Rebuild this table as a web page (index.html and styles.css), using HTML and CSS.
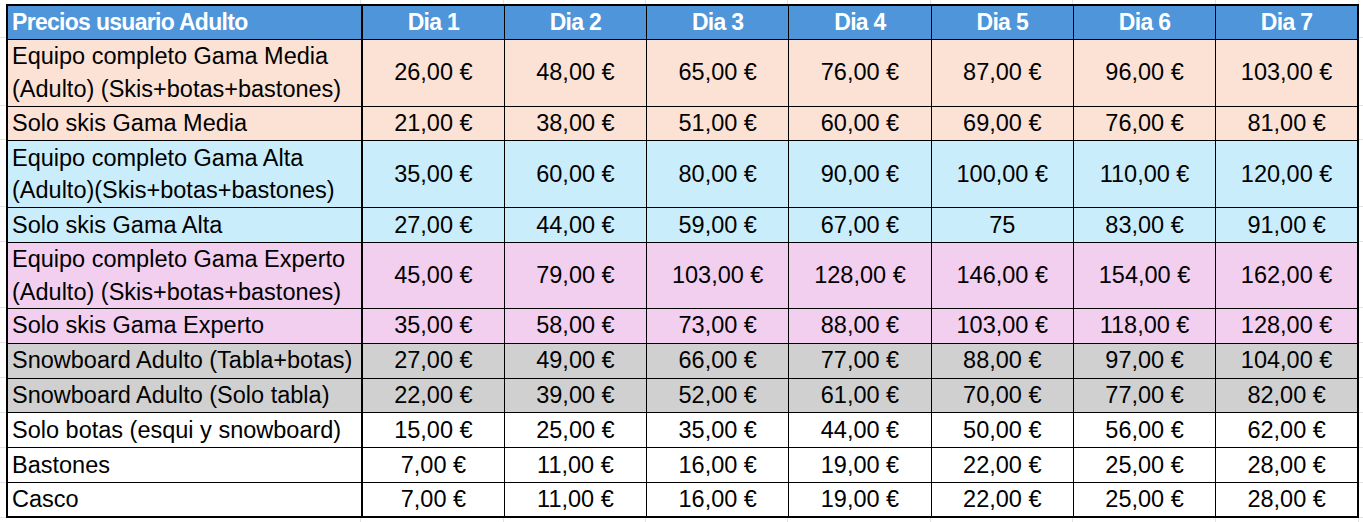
FILE: index.html
```html
<!DOCTYPE html>
<html lang="es">
<head>
<meta charset="utf-8">
<title>Precios usuario Adulto</title>
<link rel="stylesheet" href="styles.css">
</head>
<body>
<div class="sheet">
<table class="prices">
  <colgroup>
    <col class="col-label">
    <col><col><col><col><col><col><col>
  </colgroup>
  <thead>
    <tr class="head">
      <th class="label">Precios usuario Adulto</th>
      <th>Dia 1</th><th>Dia 2</th><th>Dia 3</th><th>Dia 4</th><th>Dia 5</th><th>Dia 6</th><th>Dia 7</th>
    </tr>
  </thead>
  <tbody>
    <tr class="media tall">
      <td class="label">Equipo completo Gama Media<br>(Adulto) (Skis+botas+bastones)</td>
      <td>26,00 €</td><td>48,00 €</td><td>65,00 €</td><td>76,00 €</td><td>87,00 €</td><td>96,00 €</td><td>103,00 €</td>
    </tr>
    <tr class="media">
      <td class="label">Solo skis Gama Media</td>
      <td>21,00 €</td><td>38,00 €</td><td>51,00 €</td><td>60,00 €</td><td>69,00 €</td><td>76,00 €</td><td>81,00 €</td>
    </tr>
    <tr class="alta tall">
      <td class="label">Equipo completo Gama Alta<br>(Adulto)(Skis+botas+bastones)</td>
      <td>35,00 €</td><td>60,00 €</td><td>80,00 €</td><td>90,00 €</td><td>100,00 €</td><td>110,00 €</td><td>120,00 €</td>
    </tr>
    <tr class="alta">
      <td class="label">Solo skis Gama Alta</td>
      <td>27,00 €</td><td>44,00 €</td><td>59,00 €</td><td>67,00 €</td><td>75</td><td>83,00 €</td><td>91,00 €</td>
    </tr>
    <tr class="experto tall">
      <td class="label">Equipo completo Gama Experto<br>(Adulto) (Skis+botas+bastones)</td>
      <td>45,00 €</td><td>79,00 €</td><td>103,00 €</td><td>128,00 €</td><td>146,00 €</td><td>154,00 €</td><td>162,00 €</td>
    </tr>
    <tr class="experto">
      <td class="label">Solo skis Gama Experto</td>
      <td>35,00 €</td><td>58,00 €</td><td>73,00 €</td><td>88,00 €</td><td>103,00 €</td><td>118,00 €</td><td>128,00 €</td>
    </tr>
    <tr class="snow">
      <td class="label">Snowboard Adulto (Tabla+botas)</td>
      <td>27,00 €</td><td>49,00 €</td><td>66,00 €</td><td>77,00 €</td><td>88,00 €</td><td>97,00 €</td><td>104,00 €</td>
    </tr>
    <tr class="snow">
      <td class="label">Snowboard Adulto (Solo tabla)</td>
      <td>22,00 €</td><td>39,00 €</td><td>52,00 €</td><td>61,00 €</td><td>70,00 €</td><td>77,00 €</td><td>82,00 €</td>
    </tr>
    <tr class="plain">
      <td class="label">Solo botas (esqui y snowboard)</td>
      <td>15,00 €</td><td>25,00 €</td><td>35,00 €</td><td>44,00 €</td><td>50,00 €</td><td>56,00 €</td><td>62,00 €</td>
    </tr>
    <tr class="plain">
      <td class="label">Bastones</td>
      <td>7,00 €</td><td>11,00 €</td><td>16,00 €</td><td>19,00 €</td><td>22,00 €</td><td>25,00 €</td><td>28,00 €</td>
    </tr>
    <tr class="plain">
      <td class="label">Casco</td>
      <td>7,00 €</td><td>11,00 €</td><td>16,00 €</td><td>19,00 €</td><td>22,00 €</td><td>25,00 €</td><td>28,00 €</td>
    </tr>
  </tbody>
</table>
</div>
</body>
</html>
```
FILE: styles.css
```css
html, body {
  margin: 0;
  padding: 0;
}

body {
  background-color: #ffffff;
  font-family: "Liberation Sans", Arial, sans-serif;
  color: #000000;
  /* faint spreadsheet gridlines around the table */
  background-image:
    linear-gradient(#e2e2e2, #e2e2e2), linear-gradient(#e2e2e2, #e2e2e2),
    linear-gradient(#e2e2e2, #e2e2e2), linear-gradient(#e2e2e2, #e2e2e2),
    linear-gradient(#e2e2e2, #e2e2e2), linear-gradient(#e2e2e2, #e2e2e2),
    linear-gradient(#e2e2e2, #e2e2e2), linear-gradient(#e2e2e2, #e2e2e2),
    linear-gradient(#e2e2e2, #e2e2e2), linear-gradient(#e2e2e2, #e2e2e2),
    linear-gradient(#e2e2e2, #e2e2e2), linear-gradient(#e2e2e2, #e2e2e2),
    linear-gradient(#e2e2e2, #e2e2e2), linear-gradient(#e2e2e2, #e2e2e2),
    linear-gradient(#e2e2e2, #e2e2e2), linear-gradient(#e2e2e2, #e2e2e2),
    linear-gradient(#e2e2e2, #e2e2e2), linear-gradient(#e2e2e2, #e2e2e2),
    linear-gradient(#e2e2e2, #e2e2e2), linear-gradient(#e2e2e2, #e2e2e2);
  background-repeat: no-repeat;
  background-size:
    1px 100%, 1px 100%, 1px 100%, 1px 100%, 1px 100%, 1px 100%, 1px 100%, 1px 100%,
    100% 1px, 100% 1px, 100% 1px, 100% 1px, 100% 1px, 100% 1px,
    100% 1px, 100% 1px, 100% 1px, 100% 1px, 100% 1px, 100% 1px;
  background-position:
    360px 0, 503px 0, 645px 0, 787px 0, 930px 0, 1072px 0, 1215px 0, 1358px 0,
    0 37px, 0 105px, 0 139px, 0 206px, 0 241px, 0 307px,
    0 342px, 0 377px, 0 412px, 0 447px, 0 482px, 0 517px;
  min-height: 522px;
}

.sheet {
  padding: 4px 0 0 6px;
}

.prices {
  border-collapse: collapse;
  table-layout: fixed;
  width: 1353px;
  border: 2px solid #000;
  font-size: 23.5px;
}

.col-label {
  width: 355px;
}

.prices th,
.prices td {
  border: 1px solid #000;
  padding: 0 4px;
  text-align: center;
  vertical-align: middle;
  white-space: nowrap;
  overflow: hidden;
  line-height: 27px;
}

.prices .label {
  text-align: left;
  border-right: 2px solid #000;
}

.head {
  height: 34px;
}

.head th {
  background: #4e95d9;
  color: #ffffff;
  font-weight: bold;
  font-size: 23px;
  letter-spacing: -0.7px;
}

.prices tbody tr {
  height: 34.8px;
}

.prices tbody tr.tall {
  height: 67px;
}

.prices tbody tr.experto.tall {
  height: 66px;
}

.tall .label {
  line-height: 32.5px;
}

.media td { background: #fbe2d5; }
.alta td { background: #caedfb; }
.experto td { background: #f2ceef; }
.snow td { background: #d0d0d0; }
.plain td { background: #ffffff; }
```
